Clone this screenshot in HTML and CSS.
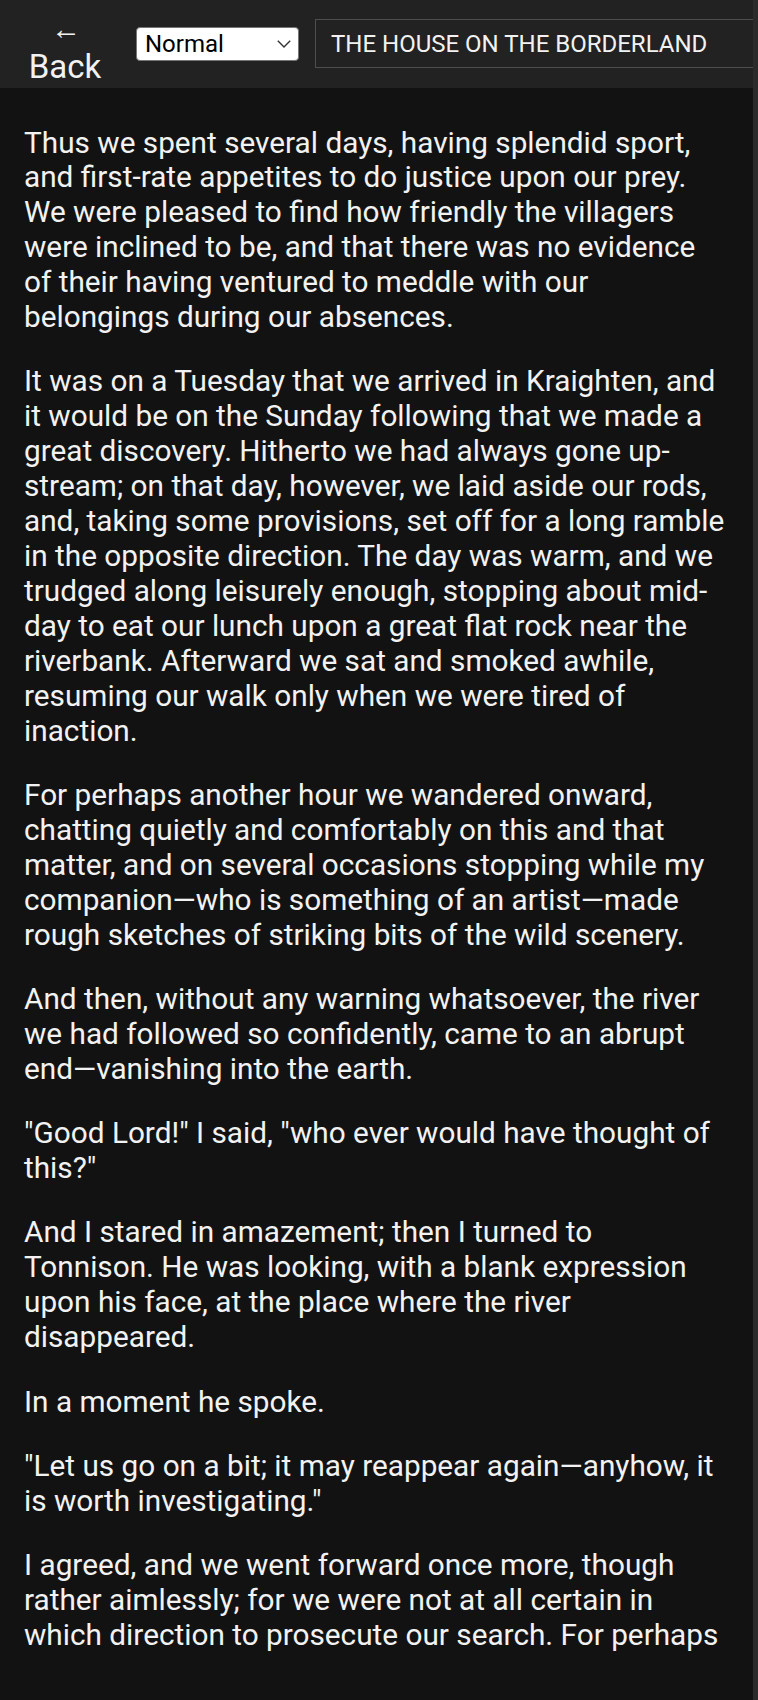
FILE: index.html
```html
<!DOCTYPE html>
<html lang="en">
<head>
<meta charset="utf-8">
<title>The House on the Borderland</title>
<link rel="stylesheet" href="styles.css">
</head>
<body>
<div class="page">
<header class="topbar">
  <button class="back" type="button"><span class="back-arrow">←</span><span class="back-label">Back</span></button>
  <span class="speed-wrap">
    <select class="speed"><option>Normal</option><option>Slow</option><option>Fast</option></select>
    <svg class="chev" width="14" height="8" viewBox="0 0 14 8" aria-hidden="true"><path d="M0.8 0.8 L7 7 L13.2 0.8" fill="none" stroke="#333" stroke-width="1.4"/></svg>
  </span>
  <div class="title">THE HOUSE ON THE BORDERLAND</div>
</header>
<main class="reader">
  <p>Thus we spent several days, having splendid sport, and first-rate appetites to do justice upon our prey. We were pleased to find how friendly the villagers were inclined to be, and that there was no evidence of their having ventured to meddle with our belongings during our absences.</p>
  <p>It was on a Tuesday that we arrived in Kraighten, and it would be on the Sunday following that we made a great discovery. Hitherto we had always gone up-stream; on that day, however, we laid aside our rods, and, taking some provisions, set off for a long ramble in the opposite direction. The day was warm, and we trudged along leisurely enough, stopping about mid-day to eat our lunch upon a great flat rock near the riverbank. Afterward we sat and smoked awhile, resuming our walk only when we were tired of inaction.</p>
  <p>For perhaps another hour we wandered onward, chatting quietly and comfortably on this and that matter, and on several occasions stopping while my companion—who is something of an artist—made rough sketches of striking bits of the wild scenery.</p>
  <p>And then, without any warning whatsoever, the river we had followed so confidently, came to an abrupt end—vanishing into the earth.</p>
  <p>"Good Lord!" I said, "who ever would have thought of this?"</p>
  <p>And I stared in amazement; then I turned to Tonnison. He was looking, with a blank expression upon his face, at the place where the river disappeared.</p>
  <p>In a moment he spoke.</p>
  <p>"Let us go on a bit; it may reappear again—anyhow, it is worth investigating."</p>
  <p>I agreed, and we went forward once more, though rather aimlessly; for we were not at all certain in which direction to prosecute our search. For perhaps</p>
</main>
</div>
</body>
</html>
```

FILE: styles.css
```css
html {
  background: #2b2b2b;
}
body {
  margin: 0 5px 0 0;
  color: #f2f2f2;
  font-family: Roboto, "Liberation Sans", sans-serif;
}
.page {
  background: #121212;
  min-height: 1700px;
}
.topbar {
  display: flex;
  align-items: center;
  height: 88px;
  background: #222222;
  padding-left: 26px;
  overflow: hidden;
}
.back {
  align-self: flex-start;
  display: flex;
  flex-direction: column;
  align-items: center;
  width: 78px;
  padding: 17px 0 0;
  background: transparent;
  border: none;
  color: #f2f2f2;
  font-family: Roboto, "Liberation Sans", sans-serif;
  cursor: pointer;
}
.back-arrow {
  font-size: 30px;
  line-height: 24px;
  height: 24px;
  margin-left: 2px;
}
.back-label {
  margin-top: 7px;
  font-size: 33px;
  line-height: 38px;
}
.speed-wrap {
  position: relative;
  display: inline-flex;
  margin-left: 32px;
}
.speed {
  appearance: none;
  -webkit-appearance: none;
  width: 163px;
  height: 34px;
  font-family: Roboto, "Liberation Sans", sans-serif;
  font-size: 24px;
  color: #000;
  background: #fff;
  border: 1px solid #767676;
  border-radius: 4px;
  padding: 0 0 0 8px;
}
.chev {
  position: absolute;
  left: 141px;
  top: 13px;
  pointer-events: none;
}
.title {
  flex: 1;
  margin-left: 16px;
  margin-top: -1px;
  height: 47px;
  display: flex;
  align-items: center;
  padding-left: 15px;
  border: 1px solid #4e4e4e;
  border-right: none;
  font-size: 24px;
  color: #f2f2f2;
  white-space: nowrap;
}
.reader {
  padding: 8px 27px 8px 24px;
}
.reader p {
  margin: 29.5px 0;
  font-size: 29.75px;
  line-height: 34.9px;
}
```
